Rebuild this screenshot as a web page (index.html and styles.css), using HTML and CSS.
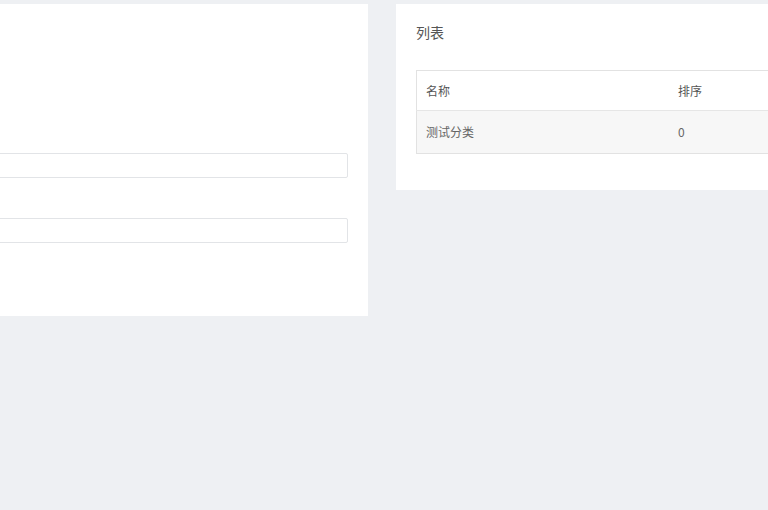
FILE: index.html
```html
<!DOCTYPE html>
<html>
<head>
    <meta charset="UTF-8">
    <title>分类管理</title>
    <link rel="stylesheet" href="styles.css">
</head>
<body>
    <div class="row">
        <section class="card form-card">
            <input type="text" class="field-input">
            <input type="text" class="field-input">
        </section>
        <section class="card list-card">
            <h2 class="card-title">列表</h2>
            <table class="list-table">
                <thead>
                    <tr>
                        <th class="col-name">名称</th>
                        <th>排序</th>
                    </tr>
                </thead>
                <tbody>
                    <tr>
                        <td>测试分类</td>
                        <td>0</td>
                    </tr>
                </tbody>
            </table>
        </section>
    </div>
</body>
</html>
```
FILE: styles.css
```css
html, body {
    margin: 0;
    height: 100%;
    overflow: hidden;
}

body {
    background-color: #eef0f3;
    font-family: "Noto Sans CJK SC", "Liberation Sans", sans-serif;
    color: #666;
}

.row {
    display: flex;
    align-items: flex-start;
    gap: 28px;
    padding-top: 4px;
    margin-left: -200px;
}

.card {
    background-color: #fff;
    box-sizing: border-box;
    flex: none;
}

.form-card {
    width: 568px;
    height: 312px;
    padding: 149px 20px 0;
    display: flex;
    flex-direction: column;
    gap: 40px;
}

.field-input {
    height: 25px;
    box-sizing: border-box;
    border: 1px solid #e2e4e7;
    border-radius: 2px;
    background: #fff;
}

.list-card {
    width: 568px;
    padding: 18px 20px 36px;
}

.card-title {
    margin: 0 0 28px;
    font-size: 14px;
    font-weight: normal;
    line-height: 20px;
    color: #555;
}

.list-table {
    width: 100%;
    border-collapse: collapse;
    border: 1px solid #e2e2e2;
    font-size: 12px;
}

.list-table th,
.list-table td {
    text-align: left;
    padding: 0 9px;
    color: #666;
}

.list-table th {
    height: 39px;
    font-weight: normal;
    color: #555;
    border-bottom: 1px solid #e6e6e6;
}

.list-table td {
    height: 40px;
    padding-bottom: 2px;
    background-color: #f7f7f7;
}

.col-name {
    width: 234px;
}
```
